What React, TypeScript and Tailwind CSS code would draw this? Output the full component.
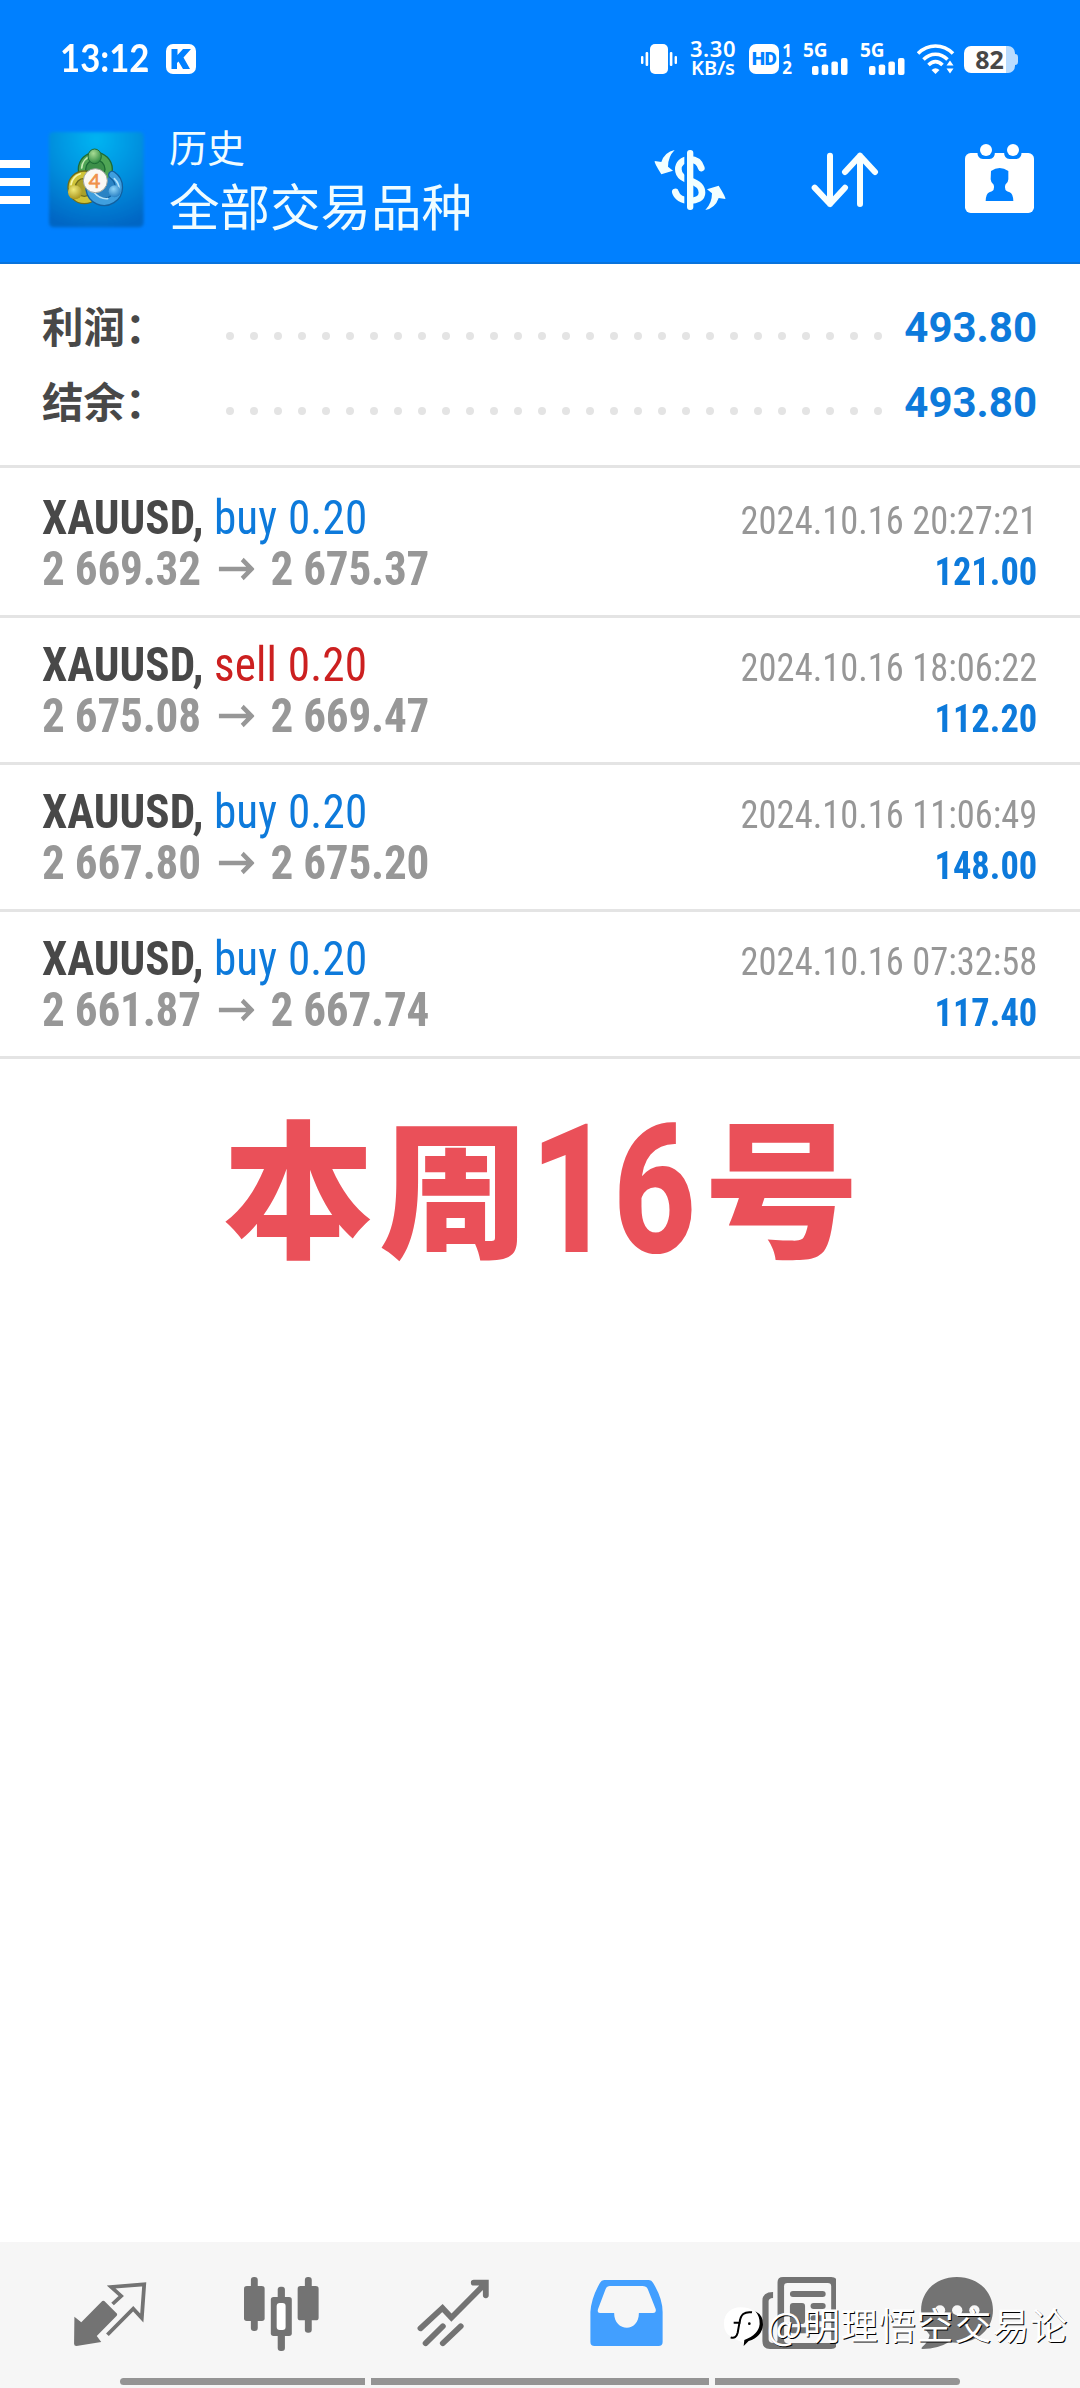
import type { ReactNode } from "react";

interface Deal {
  symbol: string;
  side: "buy" | "sell";
  volume: string;
  open: string;
  close: string;
  time: string;
  profit: string;
}

const deals: Deal[] = [
  { symbol: "XAUUSD", side: "buy", volume: "0.20", open: "2 669.32", close: "2 675.37", time: "2024.10.16 20:27:21", profit: "121.00" },
  { symbol: "XAUUSD", side: "sell", volume: "0.20", open: "2 675.08", close: "2 669.47", time: "2024.10.16 18:06:22", profit: "112.20" },
  { symbol: "XAUUSD", side: "buy", volume: "0.20", open: "2 667.80", close: "2 675.20", time: "2024.10.16 11:06:49", profit: "148.00" },
  { symbol: "XAUUSD", side: "buy", volume: "0.20", open: "2 661.87", close: "2 667.74", time: "2024.10.16 07:32:58", profit: "117.40" },
];

const summary = [
  { label: "利润：", value: "493.80" },
  { label: "结余：", value: "493.80" },
];

function Signal() {
  return (
    <div className="flex h-[32px] w-[45px] flex-col">
      <span className="h-[14px] text-[19px] leading-[14px] font-bold">5G</span>
      <svg viewBox="0 0 36 17" className="ml-[9px] mt-[1px] h-[17px] w-[36px] fill-current">
        <rect x="0" y="8" width="6.5" height="9" rx="2" />
        <rect x="9.7" y="6.5" width="6.5" height="10.5" rx="2" />
        <rect x="19.4" y="3.5" width="6.5" height="13.5" rx="2" />
        <rect x="29" y="0" width="6.5" height="17" rx="2" />
      </svg>
    </div>
  );
}

function StatusBar() {
  return (
    <div className="flex h-[118px] items-center pl-[60px] font-['Noto_Sans',sans-serif] text-white">
      <span className="w-[106px] origin-left scale-x-89 pb-[3px] font-[Lato,sans-serif] text-[39px] leading-none font-bold">
        13:12
      </span>
      <svg viewBox="0 0 30 30" className="h-[30px] w-[30px]">
        <rect width="30" height="30" rx="7" fill="#fff" />
        <path d="M5.5 5H11.5V11L17 5H25L17.5 13.5L24 25H17L12.5 17.5L11 19V25H5.5Z" fill="#0080ff" />
      </svg>

      <div className="ml-[445px] flex items-center">
        <svg viewBox="0 0 36 30" className="h-[30px] w-[36px] fill-current">
          <rect x="9" y="0" width="18" height="30" rx="5" />
          <rect x="0" y="12" width="2.4" height="8" rx="1" />
          <rect x="4.6" y="8" width="2.6" height="14" rx="1" />
          <rect x="28.8" y="8" width="2.6" height="14" rx="1" />
          <rect x="33.6" y="12" width="2.4" height="8" rx="1" />
        </svg>
        <div className="ml-[12px] flex w-[48px] flex-col items-center pb-[3px] text-[22px] leading-[19px] font-semibold">
          <span className="tracking-[0.6px]">3.30</span>
          <span className="text-[20px]">KB/s</span>
        </div>
        <div className="ml-[12px] flex h-[30px] w-[30px] items-center justify-center rounded-[7px] bg-white font-[Roboto] text-[19px] font-black tracking-[-0.5px] text-[#0080ff]">
          HD
        </div>
        <div className="ml-[2px] flex w-[12px] flex-col items-center text-[17px] leading-[17px] font-bold">
          <span>1</span>
          <span>2</span>
        </div>
        <div className="ml-[10px] flex gap-[12px]">
          <Signal />
          <Signal />
        </div>
        <svg viewBox="0 0 38 31" className="ml-[12px] h-[31px] w-[38px] fill-none stroke-current stroke-[3.6]">
          <path d="M1 9.5C11 -0.5 26 -0.5 36 9.5" />
          <path d="M6.5 15.5C13.5 8.5 23.5 8.5 30.5 15.5" />
          <path d="M11.5 21C16 16.5 21 16.5 25.5 21" />
          <path d="M14.5 26L18.5 30L22.5 26Q18.5 22.5 14.5 26Z" className="fill-current stroke-none" />
          <path d="M29.5 21.5L33 16.5L36.5 21.5ZM29.5 24.5H36.5L33 29.5Z" className="fill-current stroke-none" />
        </svg>
        <div className="ml-[9px] flex items-center">
          <div className="flex h-[27px] w-[51px] items-center justify-center rounded-[7px] bg-linear-to-r from-white from-82% to-[#b9dcff] to-82% text-[25px] leading-none font-bold text-[#474747]">
            82
          </div>
          <div className="h-[11px] w-[3px] rounded-r-sm bg-[#b9dcff]" />
        </div>
      </div>
    </div>
  );
}

function AppLogo() {
  return (
    <svg viewBox="0 0 324 336" className="h-[112px] w-[108px]">
      <defs>
        <radialGradient id="tile" cx="0.5" cy="0.08" r="0.95">
          <stop offset="0" stopColor="#00b4f2" />
          <stop offset="0.55" stopColor="#008cdc" />
          <stop offset="1" stopColor="#0066c4" />
        </radialGradient>
        <radialGradient id="green" cx="0.4" cy="0.3" r="0.8">
          <stop offset="0" stopColor="#a8dc94" />
          <stop offset="1" stopColor="#1c7d34" />
        </radialGradient>
        <radialGradient id="gold" cx="0.4" cy="0.3" r="0.8">
          <stop offset="0" stopColor="#f1ea78" />
          <stop offset="1" stopColor="#a08a12" />
        </radialGradient>
        <radialGradient id="sky" cx="0.4" cy="0.3" r="0.8">
          <stop offset="0" stopColor="#8fd4f8" />
          <stop offset="1" stopColor="#1b75bd" />
        </radialGradient>
        <filter id="soft" x="-10%" y="-10%" width="120%" height="120%">
          <feGaussianBlur stdDeviation="5" />
        </filter>
      </defs>
      <rect x="18" y="24" width="284" height="286" rx="14" fill="url(#tile)" filter="url(#soft)" />
      <g fill="none" strokeLinecap="round">
        <circle cx="157" cy="136" r="40" fill="#3d8f49" stroke="#1d6b35" strokeWidth="26" />
        <circle cx="157" cy="136" r="40" stroke="#4fa555" strokeWidth="18" />
        <path d="M116 132A42 42 0 0 1 146 95" stroke="#c9ecb8" strokeWidth="5" />
        <circle cx="124" cy="190" r="38" fill="#a9a02a" stroke="#6f6c1a" strokeWidth="26" />
        <circle cx="124" cy="190" r="38" stroke="#cfc338" strokeWidth="18" />
        <path d="M84 182A42 42 0 0 1 112 149" stroke="#f8f6a8" strokeWidth="5" />
        <path d="M140 196A44 44 0 1 0 208 153" fill="#2a83c4" stroke="#12609f" strokeWidth="26" />
        <path d="M140 196A44 44 0 1 0 208 153" stroke="#3f9fdf" strokeWidth="18" />
        <path d="M152 204Q170 226 194 224M214 164Q228 178 228 194" stroke="#b4e2fa" strokeWidth="5" />
      </g>
      <ellipse cx="155" cy="97" rx="20" ry="22" fill="url(#green)" stroke="#1d6b35" strokeWidth="3" />
      <circle cx="96" cy="205" r="21" fill="url(#gold)" />
      <circle cx="215" cy="202" r="18" fill="url(#sky)" />
      <circle cx="157" cy="170" r="36" fill="#fbf8f4" stroke="#9da5a0" strokeWidth="3" />
      <text x="155" y="191" textAnchor="middle" fontFamily="Lato, sans-serif" fontSize="60" fill="#f0914c" stroke="#f0914c" strokeWidth="2">
        4
      </text>
    </svg>
  );
}

function Toolbar() {
  return (
    <div className="flex h-[146px] items-start text-white">
      <div className="mt-[42px] flex w-[30px] flex-col gap-[10px]">
        <div className="h-[8px] bg-white" />
        <div className="h-[8px] bg-white" />
        <div className="h-[8px] bg-white" />
      </div>
      <div className="ml-[13px] mt-[6px]">
        <AppLogo />
      </div>
      <div className="ml-[18px] flex w-[484px] flex-col font-['Noto_Sans_CJK_SC',sans-serif] text-[#f0fcff]">
        <span className="mt-[3px] text-[38px] leading-[50px]">历史</span>
        <span className="mt-[3px] text-[50.5px] leading-[60px]">全部交易品种</span>
      </div>
      <svg viewBox="39 27 222 186" className="mt-[31px] h-[62px] w-[74px]">
        <path
          d="M184 84C178 64 164 58 150 58C126 58 115 73 115 88C115 110 135 117 150 122C172 129 186 140 186 158C186 174 170 182 150 182C125 182 110 170 106 156"
          fill="none"
          stroke="#f2ffff"
          strokeWidth="20"
          strokeLinecap="round"
        />
        <rect x="133" y="30" width="18" height="180" fill="#0080ff" />
        <rect x="141" y="30" width="19" height="180" rx="9" fill="#f2ffff" />
        <g fill="#f2ffff">
          <path d="M104 30Q74 36 64 66L44 63Q42 68 64 103L99 92L84 80Q84 50 104 30Z" />
          <path d="M196 210Q226 204 236 174L256 177Q258 172 236 137L201 148L216 160Q216 190 196 210Z" />
        </g>
      </svg>
      <svg viewBox="636 456 204 168" className="ml-[84px] mt-[34px] h-[56px] w-[68px]">
        <path
          d="M693 467V612M647 563L693 612L738 563M783 612V467M738 516L783 467L828 516"
          fill="none"
          stroke="#f8ffff"
          strokeWidth="18"
          strokeLinecap="round"
          strokeLinejoin="round"
        />
      </svg>
      <svg viewBox="1098 432 207 207" className="ml-[86px] mt-[26px] h-[69px] w-[69px]">
        <rect x="1098" y="459" width="207" height="180" rx="17" fill="#fff" />
        <path
          d="M1135 450V454Q1135 477 1152 477H1171Q1188 477 1188 454V450ZM1215 450V454Q1215 477 1232 477H1251Q1268 477 1268 454V450Z"
          fill="#0080ff"
        />
        <circle cx="1161" cy="450" r="18" fill="#fff" />
        <circle cx="1242" cy="450" r="18" fill="#fff" />
        <path
          d="M1176 513Q1202 495 1228 513V538Q1228 547 1219 554Q1213 571 1232 577Q1242 581 1243 603H1160Q1161 581 1171 577Q1190 571 1184 554Q1175 547 1175 538Z"
          fill="#0080ff"
        />
      </svg>
    </div>
  );
}

function DealRow({ deal }: { deal: Deal }) {
  return (
    <div className="flex h-[147px] justify-between border-b-[3px] border-[#e4e4e4] pt-[21px] pr-[43px] pl-[42px] leading-[51px] font-[Roboto] font-stretch-condensed">
      <div className="origin-left scale-x-94 text-[48px]">
        <div className="whitespace-pre">
          <span className="font-bold text-[#484848]">{deal.symbol}, </span>
          <span className={deal.side === "buy" ? "tracking-[0.2px] text-[#0d7adb]" : "tracking-[0.2px] text-[#cc2020]"}>
            {deal.side} {deal.volume}
          </span>
        </div>
        <div className="flex items-center font-bold text-[#979797]">
          <span className="tracking-[-0.2px]">{deal.open}</span>
          <svg viewBox="0 0 38 24" className="mr-[17px] ml-[19px] h-[24px] w-[38px] fill-none stroke-current stroke-[4.5]">
            <path d="M0 12H35M25 2.5L35 12L25 21.5" />
          </svg>
          <span className="tracking-[-0.2px]">{deal.close}</span>
        </div>
      </div>
      <div className="origin-right scale-x-[0.935] pt-[4px] text-right text-[39px]">
        <div className="text-[#979797]">{deal.time}</div>
        <div className="font-bold text-[#0d7adb]">{deal.profit}</div>
      </div>
    </div>
  );
}

function NavItem({ viewBox, children }: { viewBox: string; children: ReactNode }) {
  return (
    <div className="flex justify-center pt-[33px]">
      <svg viewBox={viewBox} preserveAspectRatio="none" className="h-[76px] w-[76px] fill-[#737373]">
        {children}
      </svg>
    </div>
  );
}

function BottomNav() {
  return (
    <nav className="relative flex h-[146px] flex-col bg-[#f6f6f6]">
      <div className="grid h-[136px] grid-cols-[172px_172px_172px_172px_172px_144px] pl-[24px]">
        <NavItem viewBox="209 135 221 228">
          <path d="M216 260L236 277L297 213Q300 211 303 213L340 251Q341 254 339 257L281 318L294 336L222 348Q215 348 215 341Z" />
          <path
            d="M327 222L352 198L323 171L419 163L412 264L387 236L312 314"
            fill="none"
            stroke="#737373"
            strokeWidth="11"
          />
        </NavItem>
        <NavItem viewBox="709 135 221 228">
          <rect x="729" y="141" width="20" height="162" rx="9" />
          <rect x="709" y="168" width="60" height="105" rx="8" />
          <rect x="807" y="170" width="21" height="60" rx="9" />
          <rect x="807" y="300" width="21" height="63" rx="9" />
          <rect x="787" y="201" width="61" height="117" rx="8" />
          <rect x="804" y="219" width="26" height="81" rx="9" fill="#fff" />
          <rect x="886" y="141" width="20" height="167" rx="9" />
          <rect x="865" y="168" width="61" height="103" rx="8" />
        </NavItem>
        <NavItem viewBox="1208 135 221 228">
          <path
            d="M1221 295L1285 234L1311 263L1410 160M1376 158H1411V196M1236 340L1286 289M1286 340L1338 289"
            fill="none"
            stroke="#737373"
            strokeWidth="17"
            strokeLinecap="round"
          />
        </NavItem>
        <NavItem viewBox="139 135 221 228">
          <path
            d="M186 150H316Q324 150 328 158Q356 205 356 246V336Q356 348 344 348H158Q146 348 146 336V246Q148 205 174 158Q178 150 186 150Z"
            fill="#429fff"
          />
          <path
            d="M202 168H298Q309 168 313 178L336 238Q338 249 328 249H287C287 310 215 306 215 249H174Q165 249 168 238L190 178Q194 168 202 168Z"
            fill="#f6f6f6"
          />
        </NavItem>
        <NavItem viewBox="639 135 221 228">
          <path
            d="M677 186Q646 186 646 212V334Q646 357 668 357H846Q863 357 863 340V157Q863 141 846 141H706Q690 141 690 157V330Q690 339 678 339Q664 339 664 328V214Q664 205 677 204Z"
          />
          <rect x="709" y="159" width="137" height="180" rx="10" fill="#f6f6f6" />
          <rect x="726" y="183" width="104" height="18" rx="9" />
          <rect x="726" y="219" width="44" height="63" rx="9" />
          <rect x="786" y="219" width="44" height="18" rx="9" />
          <rect x="786" y="256" width="44" height="18" rx="9" />
          <rect x="726" y="292" width="104" height="18" rx="9" />
        </NavItem>
        <NavItem viewBox="1100 135 221 228">
          <path d="M1213 141C1274 141 1318 184 1318 240C1318 296 1275 338 1213 338Q1202 338 1190 336Q1160 356 1113 357Q1107 356 1113 350Q1130 336 1134 315Q1109 288 1109 240C1109 184 1152 141 1213 141Z" />
          <g fill="#f6f6f6">
            <circle cx="1164" cy="241" r="15" />
            <circle cx="1214" cy="241" r="15" />
            <circle cx="1264" cy="241" r="15" />
          </g>
        </NavItem>
      </div>
      <div className="ml-[120px] flex h-[7px] w-[840px] gap-[6px]">
        <div className="w-[245px] rounded-l-full bg-[#949494]" />
        <div className="w-[338px] bg-[#949494]" />
        <div className="w-[245px] rounded-r-full bg-[#949494]" />
      </div>

      {/* author watermark over the tab icons */}
      <div className="absolute top-[56px] left-[724px] flex items-center text-white">
        <svg viewBox="0 0 126 144" className="mt-[4px] h-[48px] w-[42px]">
          <path d="M50 16C20 16 0 36 0 64C0 86 8 96 18 102L34 112L58 122C100 120 116 90 112 62C108 34 84 16 50 16Z" fill="#fff" />
          <path d="M94 28Q118 40 117 68Q114 104 74 117L59 132L61 114Q104 98 107 66Q108 44 94 28Z" fill="#000" />
          <path d="M84 31Q50 26 47 62H29M46 64L41 92Q36 112 20 106" fill="none" stroke="#000" strokeWidth="6" />
          <circle cx="76" cy="65" r="4" fill="#000" />
        </svg>
        <span className="ml-[1px] font-['Noto_Sans_CJK_SC',sans-serif] text-[37px] leading-[50px] font-normal tracking-[0.9px] whitespace-nowrap text-shadow-[1px_1px_0_#000]">
          @明理悟空交易论
        </span>
      </div>
    </nav>
  );
}

export default function App() {
  return (
    <div className="flex h-[2388px] w-[1080px] flex-col overflow-hidden bg-white">
      <header className="h-[264px] border-b-2 border-[#0873dc] bg-[#0080ff]">
        <StatusBar />
        <Toolbar />
      </header>

      <section className="h-[204px] border-b-[3px] border-[#e4e4e4] pt-[26px] pr-[43px] pl-[42px]">
        {summary.map((row) => (
          <div key={row.label} className="flex h-[75px] items-center justify-between">
            <span className="w-[184px] pb-[3px] font-['Noto_Sans_CJK_SC',sans-serif] text-[41.5px] leading-none font-bold text-[#484848]">
              {row.label}
            </span>
            <div className="flex flex-1 gap-[16px] pt-[16px]">
              {Array.from({ length: 28 }, (_, i) => (
                <div key={i} className="h-[8px] w-[8px] rounded-full bg-[#e4e4e4]" />
              ))}
            </div>
            <span className="font-[Roboto] text-[42px] leading-[75px] font-bold text-[#0d7adb]">{row.value}</span>
          </div>
        ))}
      </section>

      <section className="pt-[3px]">
        {deals.map((deal) => (
          <DealRow key={deal.time} deal={deal} />
        ))}
      </section>

      <div className="mt-[43px] ml-[223px] flex h-[160px] items-center font-['Noto_Sans_CJK_SC',sans-serif] text-[148px] leading-[160px] font-black text-[#ea5059]">
        <span className="w-[156px] origin-left scale-x-102">本</span>
        <span className="w-[151px] origin-left scale-x-102">周</span>
        <span className="w-[174px] origin-left scale-x-80 pt-[18px] font-[Roboto] text-[180px] font-extrabold">16</span>
        <span className="origin-left scale-x-105">号</span>
      </div>

      <div className="flex-1" />
      <BottomNav />
    </div>
  );
}
